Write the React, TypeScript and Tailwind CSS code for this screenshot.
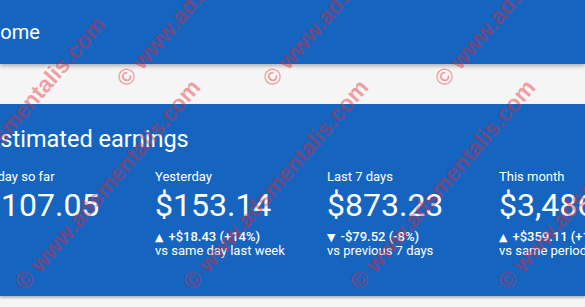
const stats = [
  { label: 'Today so far', value: '$107.05', up: null, change: null, note: null },
  { label: 'Yesterday', value: '$153.14', up: true, change: '+$18.43 (+14%)', note: 'vs same day last week' },
  { label: 'Last 7 days', value: '$873.23', up: false, change: '-$79.52 (-8%)', note: 'vs previous 7 days' },
  { label: 'This month', value: '$3,486.72', up: true, change: '+$359.11 (+11%)', note: 'vs same period last year' },
];

// left / top of each watermark line, rotated around its left edge
const marks = [
  [-76, 211],
  [121, 71],
  [267, 71],
  [439, 71],
  [19, 274],
  [187, 274],
  [354, 274],
  [502, 274],
];

export default function App() {
  return (
    <div className="relative w-[585px] h-[307px] overflow-hidden bg-[#f5f5f5] font-['Roboto',sans-serif] text-white">
      <header className="relative z-10 h-16 flex items-center bg-[#1565c0] shadow-[0_2px_4px_rgba(0,0,0,0.3)]">
        <span className="-ml-[14px] text-[20px] leading-none">Home</span>
      </header>

      <div className="h-10" />

      <section className="h-[192px] bg-[#1565c0] shadow-[0_2px_2px_rgba(0,0,0,0.25)] pt-[19px]">
        <h1 className="-ml-[13px] text-[23.5px] leading-8">Estimated earnings</h1>
        <div className="-ml-[17px] mt-[14px] flex">
          {stats.map((s) => (
            <div key={s.label} className="w-[172px] shrink-0 whitespace-nowrap">
              <div className="text-[13px] leading-4">{s.label}</div>
              <div className="text-[32px] leading-10">{s.value}</div>
              {s.change && (
                <div className="mt-[5px] text-[13px] leading-[13px]">
                  <div className="font-medium">
                    <span className="mr-[5px] font-['DejaVu_Sans',sans-serif] text-[11px]">{s.up ? '▲' : '▼'}</span>
                    {s.change}
                  </div>
                  <div>{s.note}</div>
                </div>
              )}
            </div>
          ))}
        </div>
      </section>

      <div className="pointer-events-none absolute inset-0 z-20">
        {marks.map(([x, y], i) => (
          <div
            key={i}
            className="absolute h-6 origin-left -rotate-[49deg] whitespace-nowrap font-['Liberation_Sans',sans-serif] text-[23px] font-bold leading-6 text-[rgba(230,35,45,0.42)]"
            style={{ left: x, top: y }}
          >
            © www.adsmentalis.com
          </div>
        ))}
      </div>
    </div>
  );
}
